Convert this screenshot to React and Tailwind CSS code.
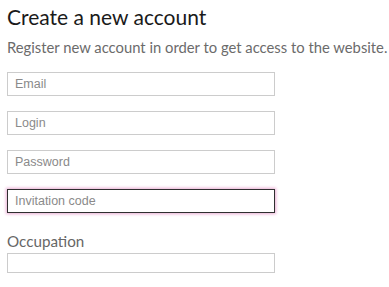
import React from "react";

const field =
  "block w-[268px] px-[7px] border bg-white text-[12.5px] text-[#333] placeholder-[#8a8a8a] outline-none font-['Liberation_Sans',Arial,sans-serif]";

export default function App() {
  return (
    <div className="px-[7px] pt-[3px] font-['Lato',sans-serif] bg-white min-h-[287px]">
      <h1 className="text-[21px] leading-[28px] text-[#1a1a1a]">Create a new account</h1>
      <p className="mt-[6px] text-[14.8px] leading-[20px] text-[#6b6b6b] whitespace-nowrap">
        Register new account in order to get access to the website.
      </p>
      <form className="mt-[15px] flex flex-col gap-[15px]">
        <input className={field + " h-[24px] border-[#cccccc]"} placeholder="Email" />
        <input className={field + " h-[24px] border-[#cccccc]"} placeholder="Login" />
        <input className={field + " h-[24px] border-[#cccccc]"} type="password" placeholder="Password" />
        <input
          className={field + " h-[24px] border-[#2f2f2f] shadow-[0_0_3px_1px_#e9acd3]"}
          placeholder="Invitation code"
          autoFocus
        />
      </form>
      <label className="block mt-[17px] text-[15.2px] leading-[22px] text-[#666]">Occupation</label>
      <input className={field + " mt-[1px] h-[20px] border-[#cccccc]"} />
    </div>
  );
}
